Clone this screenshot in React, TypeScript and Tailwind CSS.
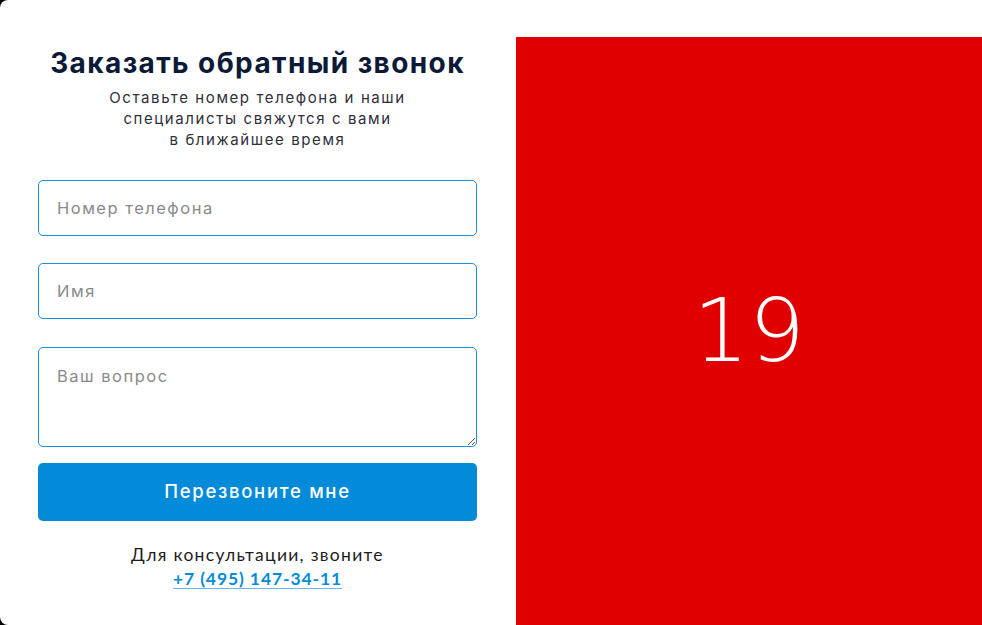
export default function App() {
  return (
    <div className="w-[982px] h-[625px] overflow-hidden bg-black">
      <div className="flex h-[625px] w-[982px] rounded-l-lg bg-white pl-[38px] pt-[37px]" style={{ fontFamily: 'Inter, "Open Sans", sans-serif' }}>
        {/* Form column */}
        <div className="flex w-[439px] shrink-0 flex-col">
          <h2 className="mt-[9px] text-center text-[28px] font-bold leading-[34px] tracking-[1.4px] text-[#0c1a38]">
            Заказать обратный звонок
          </h2>
          <p className="mx-auto mt-[7px] w-[400px] text-center text-[15px] leading-[21px] tracking-[1.6px] text-[#2f2f3a]">
            Оставьте номер телефона и наши
            <br />
            специалисты свяжутся с вами
            <br />
            в ближайшее время
          </p>

          <form className="mt-[30px] flex flex-col">
            <input
              className="h-[56px] rounded-[5px] border border-[#1a8fdc] px-[18px] text-[16.5px] tracking-[1.5px] text-[#333] outline-none placeholder:text-[#8a8a8a]"
              placeholder="Номер телефона"
            />
            <input
              className="mt-[27px] h-[56px] rounded-[5px] border border-[#1a8fdc] px-[18px] text-[16.5px] tracking-[1.5px] text-[#333] outline-none placeholder:text-[#8a8a8a]"
              placeholder="Имя"
            />
            <textarea
              className="mt-[28px] h-[100px] rounded-[5px] border border-[#1a8fdc] px-[18px] pt-[16px] text-[16.5px] tracking-[1.5px] text-[#333] outline-none placeholder:text-[#8a8a8a]"
              placeholder="Ваш вопрос"
            />
            <button
              type="button"
              className="mt-[16px] h-[58px] rounded-[5px] bg-[#038bd9] text-[18.5px] font-medium tracking-[1.7px] text-white"
            >
              Перезвоните мне
            </button>
          </form>

          <div className="mt-[22px] text-center text-[17.5px] leading-[24px] tracking-[1.3px] text-[#1d1d1d]" style={{ fontFamily: 'Lato, sans-serif' }}>
            <p>Для консультации, звоните</p>
            <a href="#" className="font-bold tracking-[0.9px] text-[#038bd9] underline decoration-[#6bb8e8] underline-offset-[3px]">
              +7 (495) 147-34-11
            </a>
          </div>
        </div>

        {/* Slide panel */}
        <div className="ml-[39px] flex flex-1 items-center justify-center bg-[#e00000]">
          <span className="text-[88px] font-extralight leading-none text-white" style={{ fontFamily: '"DejaVu Sans", sans-serif' }}>
            19
          </span>
        </div>
      </div>
    </div>
  );
}
